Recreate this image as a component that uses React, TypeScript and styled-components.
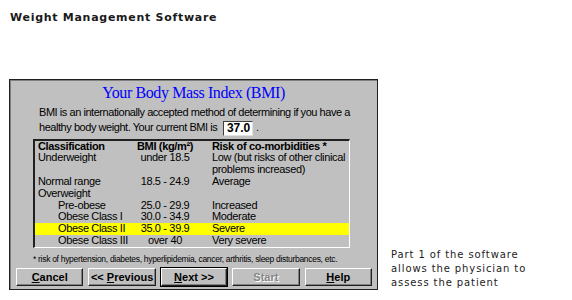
import styled, { createGlobalStyle } from 'styled-components'

const GlobalStyle = createGlobalStyle`
  html, body {
    margin: 0;
    padding: 0;
    background: #ffffff;
  }
`;

const Page = styled.div`
  width: 572px;
  height: 300px;
  padding: 11px 0 0 10px;
  box-sizing: border-box;
  overflow: hidden;
`;

const Heading = styled.h1`
  margin: 0;
  font-family: 'DejaVu Sans', Verdana, sans-serif;
  font-size: 11px;
  font-weight: bold;
  letter-spacing: 0.72px;
  line-height: 14px;
  color: #1a1a1a;
`;

const Row = styled.div`
  display: flex;
  align-items: flex-end;
  gap: 13px;
  margin: 54px 0 0 -1px;
`;

const Panel = styled.div`
  width: 369px;
  height: 211px;
  box-sizing: border-box;
  background: #c0c0c0;
  border: 1px solid #202020;
  box-shadow: inset 1px 1px 0 #808080;
  padding: 3px 5px 0 5px;
  display: flex;
  flex-direction: column;
  font-family: 'Liberation Sans', Arial, sans-serif;
  color: #000;
`;

const Title = styled.h2`
  margin: 0;
  text-align: center;
  font-family: 'Liberation Serif', 'Times New Roman', serif;
  font-weight: normal;
  font-size: 16px;
  letter-spacing: -0.4px;
  line-height: 20px;
  color: #0000ff;
`;

const Intro = styled.p`
  margin: 2px 0 0 24px;
  font-size: 11px;
  letter-spacing: -0.45px;
  line-height: 15px;
`;

const ValueBox = styled.span`
  display: inline-block;
  width: 30px;
  height: 15px;
  margin: 0 3px;
  box-sizing: border-box;
  background: #ffffff;
  border-top: 1px solid #404040;
  border-left: 1px solid #404040;
  border-right: 1px solid #e0e0e0;
  border-bottom: 1px solid #e0e0e0;
  font-weight: bold;
  font-size: 12px;
  letter-spacing: 0;
  line-height: 13px;
  padding-left: 3px;
  vertical-align: middle;
`;

const Table = styled.div`
  margin: 3px 0 0 18px;
  width: 317px;
  box-sizing: border-box;
  border-top: 2px solid #202020;
  border-left: 2px solid #202020;
  border-right: 1px solid #ffffff;
  border-bottom: 1px solid #ffffff;
  font-size: 11px;
  letter-spacing: -0.35px;
  line-height: 11.8px;
`;

const TableRow = styled.div<{ $highlight?: boolean; $head?: boolean }>`
  display: grid;
  grid-template-columns: 99px 56px 1fr;
  padding-left: 3px;
  background: ${p => (p.$highlight ? '#ffff00' : 'transparent')};
  font-weight: ${p => (p.$head ? 'bold' : 'normal')};
`;

const Cell = styled.span<{ $indent?: boolean; $center?: boolean }>`
  padding-left: ${p => (p.$indent ? '20px' : '0')};
  text-align: ${p => (p.$center ? 'center' : 'left')};
  white-space: nowrap;
`;

const Risk = styled.span`
  white-space: nowrap;
  padding-left: 19px;
`;

const Footnote = styled.div`
  margin: 6px 0 0 18px;
  font-size: 8.5px;
  letter-spacing: -0.3px;
  line-height: 11px;
`;

const Buttons = styled.div`
  display: flex;
  gap: 5px;
  margin: 3px 0 0 1px;
`;

const Button = styled.button<{ $default?: boolean }>`
  width: ${p => (p.$default ? '67px' : '68px')};
  height: 18px;
  padding: 0;
  box-sizing: border-box;
  background: #c0c0c0;
  font-family: 'Liberation Sans', Arial, sans-serif;
  font-size: 11px;
  font-weight: bold;
  color: #000;
  border: 1px solid;
  border-color: #ffffff #202020 #202020 #ffffff;
  box-shadow: ${p =>
    p.$default ? '0 0 0 1px #000, inset -1px -1px 0 #808080' : 'inset -1px -1px 0 #808080'};
  cursor: default;

  &:disabled {
    color: #888888;
    text-shadow: 1px 1px 0 #ffffff;
  }

  u {
    text-decoration: underline;
  }
`;

const Caption = styled.p`
  margin: 0;
  font-family: 'DejaVu Sans', Verdana, sans-serif;
  font-size: 10px;
  letter-spacing: 0.9px;
  line-height: 14px;
  color: #222;
`;

const rows = [
  { name: 'Underweight', bmi: 'under 18.5', risk: ['Low (but risks of other clinical', 'problems increased)'] },
  { name: 'Normal range', bmi: '18.5 - 24.9', risk: ['Average'] },
  { name: 'Overweight', bmi: '', risk: [] },
  { name: 'Pre-obese', bmi: '25.0 - 29.9', risk: ['Increased'], indent: true },
  { name: 'Obese Class I', bmi: '30.0 - 34.9', risk: ['Moderate'], indent: true },
  { name: 'Obese Class II', bmi: '35.0 - 39.9', risk: ['Severe'], indent: true, highlight: true },
  { name: 'Obese Class III', bmi: 'over  40', risk: ['Very severe'], indent: true },
]

const App = () => {
  return (
    <Page>
      <GlobalStyle />
      <Heading>Weight Management Software</Heading>
      <Row>
        <Panel>
          <Title>Your Body Mass Index (BMI)</Title>
          <Intro>
            BMI is an internationally accepted method of determining if you have a
            <br />
            healthy body weight. Your current BMI is <ValueBox>37.0</ValueBox>.
          </Intro>
          <Table>
            <TableRow $head>
              <Cell>Classification</Cell>
              <Cell $center>BMI (kg/m²)</Cell>
              <Risk>Risk of co-morbidities *</Risk>
            </TableRow>
            {rows.map(r => (
              <TableRow key={r.name} $highlight={r.highlight}>
                <Cell $indent={r.indent}>{r.name}</Cell>
                <Cell $center>{r.bmi}</Cell>
                <Risk>
                  {r.risk.map((line, i) => (
                    <span key={line}>
                      {i > 0 && <br />}
                      {line}
                    </span>
                  ))}
                </Risk>
              </TableRow>
            ))}
          </Table>
          <Footnote>
            * risk of hypertension, diabetes, hyperlipidemia, cancer, arthritis, sleep disturbances, etc.
          </Footnote>
          <Buttons>
            <Button><u>C</u>ancel</Button>
            <Button>&lt;&lt; <u>P</u>revious</Button>
            <Button $default><u>N</u>ext &gt;&gt;</Button>
            <Button disabled>Start</Button>
            <Button><u>H</u>elp</Button>
          </Buttons>
        </Panel>
        <Caption>
          Part 1 of the software
          <br />
          allows the physician to
          <br />
          assess the patient
        </Caption>
      </Row>
    </Page>
  )
}

export default App
